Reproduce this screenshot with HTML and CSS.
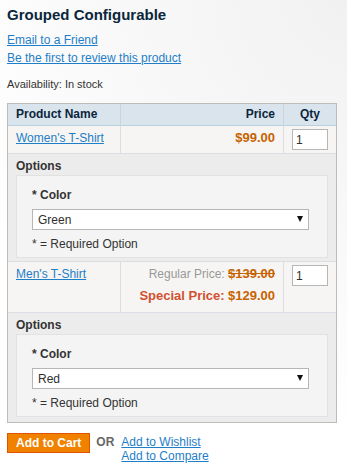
FILE: index.html
```html
<!DOCTYPE html>
<html lang="en">
<head>
    <meta charset="UTF-8">
    <meta name="viewport" content="width=device-width, initial-scale=1.0">
    <title>Grouped Configurable</title>
    <link rel="stylesheet" href="styles.css">
</head>
<body>
    <div class="product-view">
        <h1 class="product-name">Grouped Configurable</h1>
        <p class="link-line"><a href="#">Email to a Friend</a></p>
        <p class="link-line"><a href="#">Be the first to review this product</a></p>
        <p class="availability">Availability: <span>In stock</span></p>

        <table class="grouped-items">
            <thead>
                <tr>
                    <th class="col-name">Product Name</th>
                    <th class="col-price">Price</th>
                    <th class="col-qty">Qty</th>
                </tr>
            </thead>
            <tbody>
                <tr class="item-row">
                    <td class="col-name"><a href="#">Women's T-Shirt</a></td>
                    <td class="col-price"><span class="price">$99.00</span></td>
                    <td class="col-qty"><input type="text" class="qty" value="1"></td>
                </tr>
                <tr class="options-row">
                    <td colspan="3">
                        <div class="options-title">Options</div>
                        <div class="options-box">
                            <label class="option-label">* Color</label>
                            <div class="select-wrap">
                                <select class="option-select">
                                    <option>Green</option>
                                </select>
                            </div>
                            <p class="required-note">* = Required Option</p>
                        </div>
                    </td>
                </tr>
                <tr class="item-row">
                    <td class="col-name"><a href="#">Men's T-Shirt</a></td>
                    <td class="col-price">
                        <p class="old-price">Regular Price: <span class="price">$139.00</span></p>
                        <p class="special-price"><span class="price-label">Special Price:</span> <span class="price">$129.00</span></p>
                    </td>
                    <td class="col-qty"><input type="text" class="qty" value="1"></td>
                </tr>
                <tr class="options-row last">
                    <td colspan="3">
                        <div class="options-title">Options</div>
                        <div class="options-box">
                            <label class="option-label">* Color</label>
                            <div class="select-wrap">
                                <select class="option-select">
                                    <option>Red</option>
                                </select>
                            </div>
                            <p class="required-note">* = Required Option</p>
                        </div>
                    </td>
                </tr>
            </tbody>
        </table>

        <div class="add-to-box">
            <button class="btn-cart">Add to Cart</button>
            <span class="or">OR</span>
            <ul class="add-to-links">
                <li><a href="#">Add to Wishlist</a></li>
                <li><a href="#">Add to Compare</a></li>
            </ul>
        </div>
    </div>
</body>
</html>
```

FILE: styles.css
```css
* {
    margin: 0;
    padding: 0;
    box-sizing: border-box;
}

body {
    min-height: 100vh;
    padding: 0 7px;
    background: #fff radial-gradient(circle at 100% 0, #f1f1f1 0, #fff 430px);
    color: #444;
    font-family: 'Liberation Sans', Arial, sans-serif;
    font-size: 12px;
    line-height: 18px;
}

a {
    color: #1e7ec8;
    text-decoration: underline;
}

.product-name {
    margin-top: 6px;
    color: #0a263c;
    font-size: 15px;
    font-weight: bold;
    line-height: 18px;
}

.link-line:first-of-type {
    margin-top: 7px;
}

.availability {
    margin-top: 8px;
    color: #333;
    font-size: 11px;
}

/* grouped items table */

.grouped-items {
    width: 330px;
    margin-top: 10px;
    border: 1px solid #bebcb7;
    border-spacing: 0;
    table-layout: fixed;
}

.grouped-items th {
    padding: 2px 8px;
    background: #dae4ec;
    border-bottom: 1px solid #bccfdd;
    color: #0a263c;
    font-weight: bold;
    line-height: 17px;
    text-align: left;
}

.grouped-items th.col-name,
.grouped-items th.col-price {
    border-right: 1px solid #c8d4de;
}

.grouped-items .col-name {
    width: 113px;
}

.grouped-items .col-price {
    width: 163px;
    text-align: right;
}

.grouped-items .col-qty {
    width: 52px;
    text-align: center;
}

.item-row td {
    padding: 3px 8px;
    background: #f6f5f3;
    border-bottom: 1px solid #dadde3;
    vertical-align: top;
}

.item-row td.col-name,
.item-row td.col-price {
    border-right: 1px solid #dadde3;
}

.item-row td.col-qty {
    text-align: left;
}

.price {
    color: #c76200;
    font-size: 13px;
    font-weight: bold;
}

.old-price {
    color: #999;
}

.old-price .price {
    text-decoration: line-through;
}

.special-price {
    margin: 4px 0;
}

.special-price .price-label {
    color: #d2502f;
    font-size: 13px;
    font-weight: bold;
}

.qty {
    width: 36px;
    height: 21px;
    padding: 0 3px;
    border: 1px solid #b6b6b6;
    background: #fff;
    color: #2f2f2f;
    font-family: inherit;
    font-size: 12px;
}

/* options */

.options-row td {
    padding: 3px 8px;
    background: #ececec;
    border-bottom: 1px solid #dadde3;
}

.options-row.last td {
    border-bottom: none;
    padding-bottom: 5px;
}

.options-title {
    color: #333;
    font-weight: bold;
}

.options-box {
    padding: 10px 15px 4px;
    background: #f4f4f4;
    border: 1px solid #e2e2e2;
}

.option-label {
    display: block;
    color: #333;
    font-weight: bold;
}

.select-wrap {
    position: relative;
    width: 277px;
    margin-top: 5px;
}

.select-wrap::after {
    content: "";
    position: absolute;
    top: 7px;
    right: 6px;
    border-left: 3.5px solid transparent;
    border-right: 3.5px solid transparent;
    border-top: 6px solid #111;
    pointer-events: none;
}

.option-select {
    display: block;
    width: 100%;
    height: 21px;
    padding: 0 5px;
    border: 1px solid #b6b6b6;
    border-radius: 0;
    background: #fff;
    color: #2f2f2f;
    font-family: inherit;
    font-size: 12px;
    appearance: none;
    -webkit-appearance: none;
}

.required-note {
    margin-top: 5px;
    color: #333;
}

/* add to cart */

.add-to-box {
    display: flex;
    align-items: flex-start;
    margin-top: 10px;
}

.btn-cart {
    height: 20px;
    padding: 0 8px;
    background: #f18200;
    border: 1px solid #de5400;
    color: #fff;
    font-family: inherit;
    font-size: 12px;
    font-weight: bold;
    line-height: 18px;
}

.or {
    margin: 2px 7px 0 6px;
    color: #666;
    font-weight: bold;
    line-height: 14px;
}

.add-to-links {
    margin-top: 2px;
    list-style: none;
    line-height: 14px;
}
```
